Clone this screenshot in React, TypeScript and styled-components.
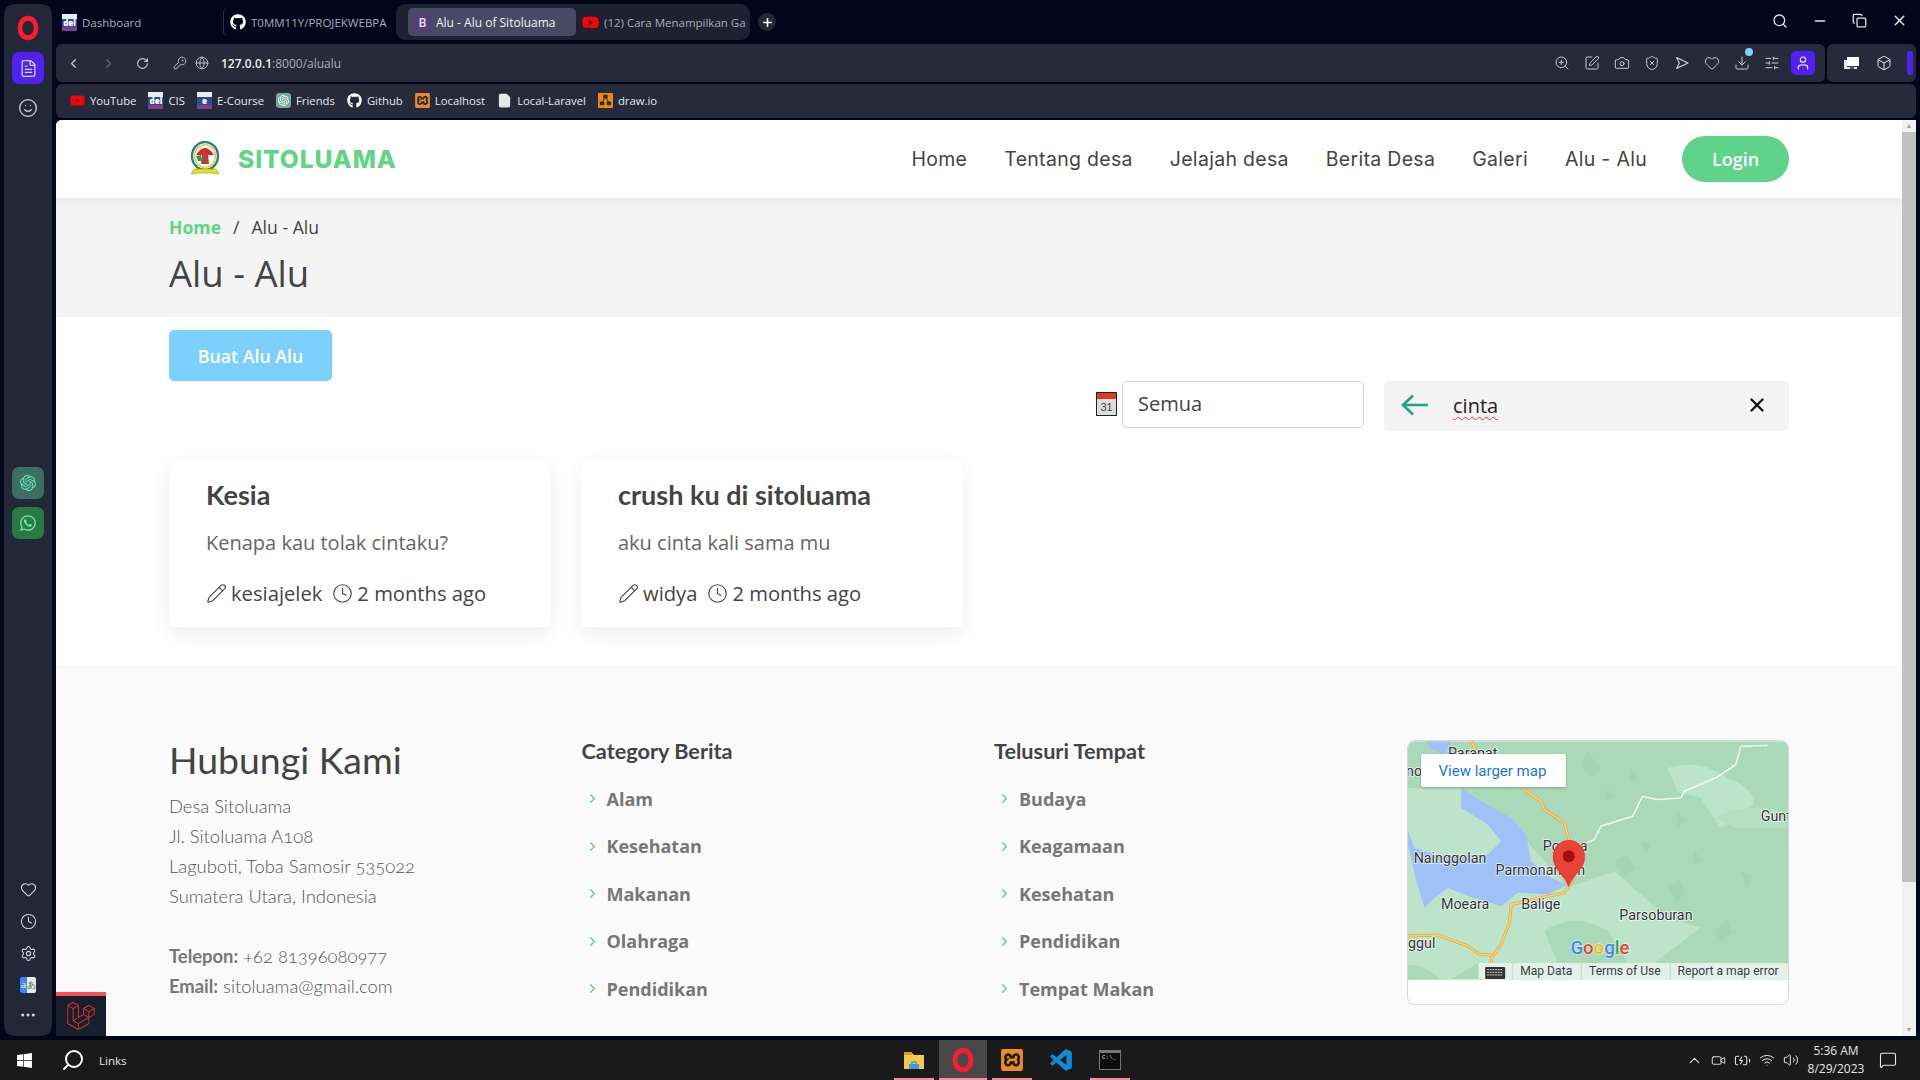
import React from 'react';
import styled, { createGlobalStyle } from 'styled-components';
import {
  Box, Camera, ChevronLeft, ChevronRight, ChevronUp, Clock, FileText, Globe, Heart,
  KeyRound, MessageSquare, Minus, Pencil, Plus, RotateCw, Search, Settings, ShieldX,
  Smile, SlidersHorizontal, SquarePen, User, Video, Volume2, Wifi, X, ZoomIn, Copy, Download,
  BatteryCharging, MoreHorizontal, File
} from 'lucide-react';
import { FaGithub, FaLaravel, FaWhatsapp, FaWindows, FaYoutube } from 'react-icons/fa';
import { SiOpenai, SiXampp, SiDiagramsdotnet } from 'react-icons/si';
import { BiLogoVisualStudio } from 'react-icons/bi';

const GlobalStyle = createGlobalStyle`
  html, body {
    margin: 0;
    padding: 0;
    background: #02061a;
    font-family: "Open Sans", "Liberation Sans", sans-serif;
  }
  * { box-sizing: border-box; }
`;

const Screen = styled.div`
  width: 1920px;
  height: 1080px;
  display: flex;
  flex-direction: column;
  overflow: hidden;
  background: #02061a;
`;

const Desktop = styled.div`
  flex: 1;
  min-height: 0;
  display: flex;
  padding: 4px;
  gap: 4px;
`;

/* opera side panel */
const Sidebar = styled.aside`
  width: 48px;
  flex-shrink: 0;
  background: #232838;
  border-radius: 10px;
  display: flex;
  flex-direction: column;
  align-items: center;
  padding: 8px 0 7px;
`;

const SideGroup = styled.div<{ $top?: number; $gap?: number; $auto?: boolean }>`
  display: flex;
  flex-direction: column;
  gap: ${p => p.$gap ?? 0}px;
  margin-top: ${p => (p.$auto ? 'auto' : `${p.$top ?? 0}px`)};
`;

const SideSlot = styled.div<{ $active?: boolean; $bg?: string; $h?: number }>`
  width: 32px;
  height: ${p => p.$h ?? 32}px;
  display: flex;
  align-items: center;
  justify-content: center;
  border-radius: 7px;
  color: #d6d9e2;
  background: ${p => (p.$active ? '#4f22f2' : p.$bg ?? 'transparent')};
`;

const TranslateIcon = styled.div`
  width: 16px;
  height: 16px;
  border-radius: 2px;
  display: flex;
  overflow: hidden;
  font-size: 9px;
  line-height: 16px;
  text-align: center;
  span { flex: 1; color: #fff; background: #4285f4; }
  span + span { color: #2e7d32; background: #e8e8e8; }
`;

const Browser = styled.div`
  flex: 1;
  min-width: 0;
  display: flex;
  flex-direction: column;
`;

const TabStrip = styled.div`
  height: 40px;
  margin: -2px 0 2px;
  display: flex;
  align-items: center;
  color: #a9adb9;
  font-size: 11.5px;
`;

const Tab = styled.div<{ $w: number; $pad?: number; $active?: boolean; $rule?: boolean }>`
  width: ${p => p.$w}px;
  height: 28px;
  flex-shrink: 0;
  display: flex;
  align-items: center;
  gap: 5px;
  padding: 0 ${p => (p.$active ? 6 : 8)}px 0 ${p => p.$pad ?? 6}px;
  overflow: hidden;
  white-space: nowrap;
  border-radius: 5px;
  border-left: ${p => (p.$rule ? '1px solid #30343f' : 'none')};
  background: ${p => (p.$active ? '#464a62' : 'transparent')};
  color: ${p => (p.$active ? '#f2f2f6' : '#a9adb9')};
  font-size: ${p => (p.$active ? 12 : 11.5)}px;
  svg { flex-shrink: 0; }
`;

const TabGroup = styled.div`
  width: 354px;
  height: 36px;
  flex-shrink: 0;
  display: flex;
  align-items: center;
  gap: 6px;
  padding-left: 6px;
  border-radius: 9px;
  background: #1d2131;
`;

const GroupMark = styled.div`
  width: 5px;
  height: 24px;
  border-radius: 3px;
  background: #4f22f2;
`;

const BootstrapIcon = styled.span`
  width: 17px;
  height: 17px;
  flex-shrink: 0;
  border-radius: 3px;
  background: #563d7c;
  color: #e8e4f2;
  font-size: 12px;
  font-weight: 600;
  line-height: 17px;
  text-align: center;
`;

const DelIcon = styled.span`
  width: 15px;
  height: 17px;
  flex-shrink: 0;
  background: linear-gradient(#e8edf7 0 30%, #2a4b9b 30% 75%, #7f3f8f 75%);
  color: #fff;
  font-size: 8px;
  font-weight: 800;
  line-height: 17px;
  text-align: center;
`;

const NewTab = styled.div`
  width: 18px;
  height: 18px;
  margin-left: 8px;
  border-radius: 50%;
  background: #232838;
  color: #fff;
  display: flex;
  align-items: center;
  justify-content: center;
`;

const WindowControls = styled.div`
  margin-left: auto;
  margin-right: 8px;
  margin-top: -3px;
  display: flex;
  align-items: center;
  gap: 24px;
  color: #e6e7ea;
`;

const BarRow = styled.div`
  height: 38px;
  display: flex;
  gap: 2px;
`;

const AddressBar = styled.div`
  flex: 1;
  display: flex;
  align-items: center;
  background: #262a3a;
  border-radius: 6px;
  padding-left: 10px;
  color: #c9ccd5;
`;

const NavIcons = styled.div`
  display: flex;
  align-items: center;
  gap: 20px;
  margin-right: 24px;
`;

const SecureIcons = styled.div`
  display: flex;
  align-items: center;
  gap: 8px;
  margin-right: 12px;
`;

const Url = styled.div`
  font-size: 12px;
  font-weight: 600;
  color: #eceef2;
  span { color: #a9adb9; font-weight: 400; }
`;

const ToolIcons = styled.div`
  margin-left: auto;
  display: flex;
  align-items: center;
  gap: 14px;
  margin-right: 10px;
  position: relative;
`;

const ProfileButton = styled.div`
  width: 24px;
  height: 24px;
  margin-left: -3px;
  border-radius: 5px;
  background: #4f22f2;
  color: #fff;
  display: flex;
  align-items: center;
  justify-content: center;
`;

const DownloadBox = styled.div`
  position: relative;
  display: flex;
`;

const DownloadDot = styled.span`
  position: absolute;
  top: -7px;
  right: -3px;
  width: 8px;
  height: 8px;
  border-radius: 50%;
  background: #7dd0fb;
`;

const ExtensionPanel = styled.div`
  width: 89px;
  display: flex;
  align-items: center;
  gap: 16px;
  padding-left: 17px;
  background: #262a3a;
  border-radius: 6px;
  color: #e6e7ea;
`;

const PanelMark = styled.div`
  width: 6px;
  height: 24px;
  margin-left: -1px;
  border-radius: 3px;
  background: #4f22f2;
`;

const BookmarksBar = styled.div`
  margin-top: 2px;
  height: 34px;
  display: flex;
  align-items: center;
  gap: 12px;
  padding: 0 0 2px 14px;
  background: #262a3a;
  border-radius: 6px;
  color: #e6e7ea;
  font-size: 11.3px;
`;

const Bookmark = styled.div`
  display: flex;
  align-items: center;
  gap: 5px;
  white-space: nowrap;
`;

const FriendsIcon = styled.span`
  width: 15px;
  height: 15px;
  border-radius: 3px;
  background: #74aa9c;
  color: #fff;
  display: flex;
  align-items: center;
  justify-content: center;
`;

const Viewport = styled.div`
  flex: 1;
  min-height: 0;
  margin-top: 2px;
  display: flex;
  background: #fff;
  border-top-left-radius: 6px;
  overflow: hidden;
`;

const Page = styled.main`
  flex: 1;
  min-width: 0;
  position: relative;
  overflow: hidden;
  background: #fff;
  display: flex;
  flex-direction: column;
`;

const ScrollTrack = styled.div`
  width: 14px;
  flex-shrink: 0;
  display: flex;
  flex-direction: column;
  align-items: center;
  background: #f1f1f1;
  color: #a0a0a0;
  font-size: 7px;
  line-height: 12px;
`;

const ScrollThumb = styled.div`
  width: 100%;
  height: 750px;
  background: #c1c1c1;
`;

const ScrollEnd = styled.div`
  margin-top: auto;
`;

const Container = styled.div`
  width: 1620px;
  margin: 0 auto;
`;

const SiteHeader = styled.header`
  height: 78px;
  flex-shrink: 0;
  background: #fff;
  position: relative;
  z-index: 1;
`;

const HeaderInner = styled(Container)`
  height: 100%;
  display: flex;
  align-items: center;
`;

const Brand = styled.div`
  display: flex;
  align-items: center;
  gap: 18px;
  padding-left: 21px;
  font-family: Inter, "Liberation Sans", sans-serif;
  font-size: 24.6px;
  font-weight: 800;
  letter-spacing: 0.9px;
  color: #62d484;
`;

const NavMenu = styled.nav`
  margin-left: auto;
  display: flex;
  align-items: center;
  gap: 37px;
  font-family: Inter, "Liberation Sans", sans-serif;
  font-size: 19.5px;
  font-weight: 400;
  letter-spacing: 0.3px;
  color: #444;
`;

const LoginButton = styled.div`
  width: 107px;
  height: 46px;
  margin-left: -2px;
  border-radius: 23px;
  background: #5fd38a;
  color: #fff;
  display: flex;
  align-items: center;
  justify-content: center;
  font-family: "Open Sans", sans-serif;
  font-size: 18px;
  font-weight: 600;
  letter-spacing: 0;
`;

const TitleBand = styled.section`
  height: 119px;
  flex-shrink: 0;
  padding-top: 17px;
  background: linear-gradient(#ececec, #f4f4f4 14px);
`;

const Crumbs = styled.div`
  display: flex;
  gap: 12px;
  font-size: 17.6px;
  line-height: 24px;
  color: #444;
  b { color: #62d484; font-weight: 700; }
`;

const PageTitle = styled.h1`
  margin: 11px 0 0;
  font-size: 36.5px;
  font-weight: 400;
  line-height: 46px;
  color: #444;
`;

const Content = styled(Container)`
  padding: 13px 0 38px;
`;

const CreateButton = styled.div`
  width: 163px;
  height: 51px;
  border-radius: 5px;
  background: #7dd0fb;
  color: #fff;
  display: flex;
  align-items: center;
  justify-content: center;
  font-size: 17.8px;
  font-weight: 600;
`;

const FilterRow = styled.div`
  display: flex;
  justify-content: flex-end;
  align-items: flex-start;
`;

const CalendarBox = styled.div`
  margin: 11px 5px 0 0;
  display: flex;
`;

const SelectBox = styled.div`
  width: 242px;
  height: 47px;
  margin-right: 20px;
  padding: 0 0 2px 15px;
  display: flex;
  align-items: center;
  border: 1px solid #ced4da;
  border-radius: 5px;
  background: #fff;
  font-size: 20px;
  color: #444;
`;

const SearchBox = styled.div`
  width: 405px;
  height: 50px;
  padding: 0 21px 2px 17px;
  display: flex;
  align-items: center;
  border-radius: 5px;
  background: #f3f3f3;
  font-size: 20px;
  color: #222;
`;

const SearchText = styled.span`
  margin-left: 24px;
  text-decoration: underline wavy #e53935 1.4px;
  text-underline-offset: 3px;
`;

const ClearIcon = styled.div`
  margin-left: auto;
  display: flex;
  color: #111;
`;

const CardGrid = styled.div`
  margin-top: 30px;
  display: grid;
  grid-template-columns: repeat(4, 382px);
  gap: 30px;
`;

const PostCard = styled.article`
  height: 166px;
  padding: 18px 37px 0;
  border-radius: 5px;
  background: #fff;
  box-shadow: 0 6px 22px rgba(0, 0, 0, 0.08);
`;

const PostTitle = styled.h3`
  margin: 0;
  font-family: Lato, "Liberation Sans", sans-serif;
  font-size: 27px;
  font-weight: 700;
  line-height: 32px;
  color: #444;
  white-space: nowrap;
`;

const PostBody = styled.p`
  margin: 16px 0 0;
  font-size: 20px;
  line-height: 32px;
  color: #666;
`;

const PostMeta = styled.div`
  margin-top: 18px;
  display: flex;
  align-items: center;
  gap: 4px;
  font-size: 20.2px;
  line-height: 32px;
  color: #444;
  svg { flex-shrink: 0; }
  span { margin-right: 6px; }
`;

const SiteFooter = styled.footer`
  flex: 1;
  padding-top: 73px;
  background: #fafafa;
`;

const FooterGrid = styled(Container)`
  display: grid;
  grid-template-columns: repeat(4, 1fr);
  gap: 30px;
`;

const ContactTitle = styled.h2`
  margin: 0 0 9px;
  font-family: Lato, "Liberation Sans", sans-serif;
  font-size: 37.4px;
  font-weight: 400;
  line-height: 44px;
  color: #444;
`;

const ContactLines = styled.div`
  font-family: Lato, "Liberation Sans", sans-serif;
  font-size: 18.4px;
  font-weight: 300;
  line-height: 30px;
  font-variant-numeric: oldstyle-nums;
  color: #555;
  b { font-weight: 700; color: #777; }
`;

const ContactGap = styled.div`
  height: 30px;
`;

const ColumnTitle = styled.h4`
  margin: 0 0 11px;
  font-family: Lato, "Liberation Sans", sans-serif;
  font-size: 21.7px;
  font-weight: 700;
  line-height: 26px;
  color: #444;
`;

const LinkItem = styled.div`
  height: 47.5px;
  display: flex;
  align-items: center;
  gap: 7px;
  padding-left: 3px;
  font-size: 18px;
  font-weight: 700;
  color: #777;
  svg { color: #5fd38a; }
`;

const MapCard = styled.div`
  position: relative;
  height: 265px;
  margin-top: 2px;
  border: 1px solid #d8d8d8;
  border-radius: 8px;
  background: #fff;
  overflow: hidden;
  svg { display: block; }
`;

const LargerMap = styled.div`
  position: absolute;
  left: 13px;
  top: 13px;
  width: 145px;
  height: 33px;
  padding-left: 18px;
  display: flex;
  align-items: center;
  border-radius: 2px;
  background: #fff;
  box-shadow: 0 1px 3px rgba(0, 0, 0, 0.25);
  font-family: Roboto, sans-serif;
  font-size: 15px;
  color: #1a73e8;
`;

const DevBar = styled.div`
  position: absolute;
  left: 0;
  bottom: 0;
  width: 50px;
  height: 44px;
  border-top: 4px solid #f9505e;
  background: #18202e;
  color: #e0342b;
  display: flex;
  align-items: center;
  justify-content: center;
`;

const Taskbar = styled.div`
  height: 40px;
  flex-shrink: 0;
  position: relative;
  display: flex;
  align-items: center;
  background: #1a1a1a;
  color: #e6e6e6;
`;

const StartArea = styled.div`
  display: flex;
  align-items: center;
  padding-left: 16px;
  gap: 28px;
  font-size: 11.5px;
`;

const SearchHint = styled.div`
  display: flex;
  align-items: center;
  gap: 14px;
`;

const MirroredSearch = styled(Search)`
  transform: scaleX(-1);
`;

const TaskApps = styled.div`
  position: absolute;
  left: 894px;
  top: 0;
  height: 40px;
  display: flex;
  gap: 5px;
`;

const TaskApp = styled.div<{ $active?: boolean; $open?: boolean; $w?: number }>`
  width: ${p => p.$w ?? 40}px;
  height: 40px;
  display: flex;
  align-items: center;
  justify-content: center;
  background: ${p => (p.$active ? '#484848' : 'transparent')};
  box-shadow: ${p => (p.$open ? 'inset 0 -2px 0 #ff8d99' : 'none')};
`;

const ConsoleIcon = styled.div`
  width: 22px;
  height: 20px;
  border: 1px solid #777;
  border-top-width: 3px;
  background: #0c0c0c;
  color: #ddd;
  font-family: "Liberation Mono", monospace;
  font-size: 6px;
  line-height: 10px;
  padding-left: 2px;
`;

const Tray = styled.div`
  margin-left: auto;
  display: flex;
  align-items: center;
  padding-right: 23px;
  gap: 8px;
  color: #e6e6e6;
`;

const TrayTime = styled.div`
  width: 72px;
  margin: 0 -1px 0 -7px;
  font-size: 12px;
  line-height: 18px;
  text-align: center;
`;

const OperaLogo = ({ size = 22 }: { size?: number }) => (
  <svg width={size} height={size} viewBox="0 0 24 24">
    <ellipse cx="12" cy="12" rx="7.5" ry="9" fill="none" stroke="#ff1b2d" strokeWidth="4.4" />
  </svg>
);

const SiteLogo = () => (
  <svg width="30" height="36" viewBox="0 0 30 36">
    <ellipse cx="15" cy="15" rx="13" ry="14" fill="#fff" stroke="#2d7f8f" strokeWidth="2.4" />
    <ellipse cx="15" cy="15" rx="10.4" ry="11.4" fill="none" stroke="#d8cf3a" strokeWidth="1.4" />
    <path d="M6 14 Q15 0 24 14 Z" fill="#e0261c" />
    <path d="M11 23 L12 13 L15 9 L18 13 L19 23 Z" fill="#b5413f" />
    <path d="M6 15 L11 14 L12 20 L8 20 Z" fill="#2f9a4e" />
    <path d="M1 33 L4 28 L26 28 L29 33 L22 32 L8 32 Z" fill="#eddf1f" stroke="#a09a20" strokeWidth=".6" />
  </svg>
);

const CalendarIcon = () => (
  <svg width="21" height="24" viewBox="0 0 21 24">
    <rect x="0.5" y="0.5" width="20" height="23" fill="#ddd" stroke="#222" />
    <rect x="1" y="1" width="19" height="6" fill="#e6381f" />
    <text x="10.5" y="19" textAnchor="middle" fontFamily="Liberation Sans" fontSize="11" fill="#444">31</text>
  </svg>
);

const BackArrow = () => (
  <svg width="28" height="22" viewBox="0 0 28 22" fill="none" stroke="#1aa587" strokeWidth="2.6">
    <path d="M2 11H27M12 1.5L2 11l10 9.5" />
  </svg>
);

const FlowIcon = () => (
  <svg width="16" height="16" viewBox="0 0 24 24" fill="none" stroke="currentColor" strokeWidth="1.8" strokeLinejoin="round">
    <path d="M4 4l17 8-17 8 4-8z" />
  </svg>
);

const ScreenIcon = () => (
  <svg width="16" height="14" viewBox="0 0 16 14">
    <path d="M3 1h12v9H3z" fill="#fff" />
    <path d="M0 4h3v7h10v2H0z" fill="#e6e7ea" />
    <path d="M6 10h4v3H6z" fill="#555" />
  </svg>
);

const FolderIcon = () => (
  <svg width="22" height="20" viewBox="0 0 22 20">
    <path d="M1 3h8l2 2h10v14H1z" fill="#f5c84c" />
    <path d="M1 2h8v3H1z" fill="#d49a22" />
    <path d="M6 14h10v5H6z" fill="#3f9be0" />
    <path d="M9 14v-2h4v2" fill="none" stroke="#3f9be0" strokeWidth="1.5" />
  </svg>
);

const ROADS = 'M210 30 L225 60 M360 170 L420 210 L430 235 L490 275 L505 330 L512 450 L490 485 L420 500 L330 520 L325 575 L300 640 L272 680 L270 696 M20 615 L110 612 L200 645 L235 670 L272 672';

const MapDrawing = () => (
  <svg width="381" height="239" viewBox="20 30 1145 716" fontFamily="Roboto, sans-serif">
    <rect x="20" y="30" width="1145" height="716" fill="#aad9b9" />
    <path d="M20 170 L180 170 L350 300 L500 470 L640 420 L800 560 L900 590 L760 696 L230 696 L150 746 L20 746 Z" fill="#bce4ca" />
    <path d="M800 110 Q900 80 980 140 Q1060 170 1060 220 L960 290 L900 200 L830 180 Z" fill="#bce4ca" />
    <path d="M940 260 Q1040 210 1130 240 L1165 290 L1000 290 Z" fill="#b4dfc3" />
    <path d="M430 600 Q520 540 620 600 L680 696 L470 696 Z" fill="#a9d9b8" />
    <path d="M20 700 Q70 700 120 746 L20 746 Z" fill="#a9d9b8" />
    <g fill="#a0d2b1" opacity=".7">
      <path d="M560 60l40 50-30 30-30-40z" />
      <path d="M640 390l40-20 25 45-35 20z" />
      <path d="M800 470l35-25 20 35-25 35z" />
      <path d="M940 600l40-35 15 40-35 25z" />
      <path d="M720 330l30 12-18 20z" />
      <path d="M830 240l24 30-30 25z" />
      <path d="M1020 420l36 12-18 36z" />
      <path d="M620 170l20 32-32 6z" />
      <path d="M880 360l30 30-35 10z" />
      <path d="M690 110l25 30-30 10z" />
    </g>
    <path d="M75 30 L150 30 L130 70 L85 50 Z" fill="#9fc1f8" />
    <path d="M180 170 L250 215 L330 260 L375 310 L390 390 L450 440 L498 462 L440 490 L350 485 L300 525 L200 495 L140 470 L100 500 L70 530 L45 450 L20 340 L20 300 L40 350 L120 375 L260 370 L300 330 L260 280 L180 230 Z" fill="#9fc1f8" />
    <g fill="none" strokeLinejoin="round">
      <path d={ROADS} stroke="#e6a83c" strokeWidth="9" />
      <path d={ROADS} stroke="#fdd26e" strokeWidth="5" />
      <path d="M1100 42 L1020 45 L1005 100 L945 140 L850 180 L840 200 L770 205 L725 195 L695 255 L600 285 L580 325 L555 335" stroke="#fff" strokeWidth="4" />
    </g>
    <g fontSize="43" fill="#333" stroke="#fff" strokeWidth="5" paintOrder="stroke" strokeOpacity=".75">
      <text x="140" y="80">Parapat</text>
      <text x="14" y="134">no</text>
      <text x="425" y="358">Porsea</text>
      <text x="37" y="396">Nainggolan</text>
      <text x="283" y="431">Parmonangan</text>
      <text x="119" y="534">Moeara</text>
      <text x="360" y="534">Balige</text>
      <text x="655" y="568">Parsoburan</text>
      <text x="1080" y="270">Gunt</text>
      <text x="20" y="650">ggul</text>
    </g>
    <path d="M503 466 C490 430 456 415 456 375 A47.5 47.5 0 0 1 551 375 C551 415 516 430 503 466 Z" fill="#ea4335" stroke="#c5221f" strokeWidth="1.5" />
    <circle cx="503" cy="375" r="18" fill="#a50e0e" />
    <text x="508" y="668" fontSize="56" fontFamily="Roboto, sans-serif" fontWeight="500" stroke="#fff" strokeWidth="4" paintOrder="stroke" strokeOpacity=".6">
      <tspan fill="#4285f4">G</tspan>
      <tspan fill="#ea4335">o</tspan>
      <tspan fill="#fbbc05">o</tspan>
      <tspan fill="#4285f4">g</tspan>
      <tspan fill="#34a853">l</tspan>
      <tspan fill="#ea4335">e</tspan>
    </text>
    <rect x="232" y="696" width="933" height="50" fill="#e4f1e9" />
    <path d="M335 696v50M541 696v50M808 696v50" stroke="#bcdcc8" strokeWidth="3" />
    <rect x="252" y="708" width="60" height="36" rx="3" fill="#333" />
    <path d="M258 716h48M258 724h48M258 732h48" stroke="#e4f1e9" strokeWidth="3" strokeDasharray="5 3" />
    <g fontSize="36.5" fill="#3c4043">
      <text x="357" y="733">Map Data</text>
      <text x="564" y="733">Terms of Use</text>
      <text x="830" y="733">Report a map error</text>
    </g>
  </svg>
);

const posts = [
  { title: 'Kesia', body: 'Kenapa kau tolak cintaku?', author: 'kesiajelek' },
  { title: 'crush ku di sitoluama', body: 'aku cinta kali sama mu', author: 'widya' },
];

const categories = ['Alam', 'Kesehatan', 'Makanan', 'Olahraga', 'Pendidikan'];
const places = ['Budaya', 'Keagamaan', 'Kesehatan', 'Pendidikan', 'Tempat Makan'];

const App: React.FC = () => {
  return (
    <Screen>
      <GlobalStyle />
      <Desktop>
        <Sidebar>
          <SideGroup $gap={8}>
            <SideSlot><OperaLogo size={26} /></SideSlot>
            <SideSlot $active><FileText size={19} strokeWidth={1.6} /></SideSlot>
            <SideSlot><Smile size={20} strokeWidth={1.5} /></SideSlot>
          </SideGroup>
          <SideGroup $top={343} $gap={8}>
            <SideSlot $bg="#3c6f63"><SiOpenai size={16} color="#6ee7b7" /></SideSlot>
            <SideSlot $bg="#2a7a46"><FaWhatsapp size={18} color="#6ff0a0" /></SideSlot>
          </SideGroup>
          <SideGroup $auto>
            <SideSlot><Heart size={17} strokeWidth={1.5} /></SideSlot>
            <SideSlot><Clock size={17} strokeWidth={1.5} /></SideSlot>
            <SideSlot><Settings size={17} strokeWidth={1.5} /></SideSlot>
            <SideSlot><TranslateIcon><span>a</span><span>あ</span></TranslateIcon></SideSlot>
            <SideSlot $h={28}><MoreHorizontal size={18} /></SideSlot>
          </SideGroup>
        </Sidebar>

        <Browser>
          <TabStrip>
            <Tab $w={167} $pad={6}><DelIcon>del</DelIcon>Dashboard</Tab>
            <Tab $w={173} $rule $pad={6}><FaGithub size={16} color="#fff" />T0MM11Y/PROJEKWEBPA</Tab>
            <TabGroup>
              <GroupMark />
              <Tab $w={168} $active><BootstrapIcon>B</BootstrapIcon>Alu - Alu of Sitoluama</Tab>
              <Tab $w={168} $pad={0}><FaYoutube size={17} color="#f00" />(12) Cara Menampilkan Ga</Tab>
            </TabGroup>
            <NewTab><Plus size={13} strokeWidth={3} /></NewTab>
            <WindowControls>
              <Search size={16} />
              <Minus size={16} />
              <Copy size={15} />
              <X size={17} />
            </WindowControls>
          </TabStrip>

          <BarRow>
            <AddressBar>
              <NavIcons>
                <ChevronLeft size={15} />
                <ChevronRight size={15} color="#666a78" />
                <RotateCw size={13} />
              </NavIcons>
              <SecureIcons>
                <KeyRound size={14} strokeWidth={1.5} />
                <Globe size={14} strokeWidth={1.5} />
              </SecureIcons>
              <Url>127.0.0.1<span>:8000/alualu</span></Url>
              <ToolIcons>
                <ZoomIn size={16} strokeWidth={1.5} />
                <SquarePen size={16} strokeWidth={1.5} />
                <Camera size={16} strokeWidth={1.5} />
                <ShieldX size={16} strokeWidth={1.5} />
                <FlowIcon />
                <Heart size={16} strokeWidth={1.5} />
                <DownloadBox><Download size={16} strokeWidth={1.5} /><DownloadDot /></DownloadBox>
                <SlidersHorizontal size={16} strokeWidth={1.5} />
                <ProfileButton><User size={16} strokeWidth={1.6} /></ProfileButton>
              </ToolIcons>
            </AddressBar>
            <ExtensionPanel>
              <ScreenIcon />
              <Box size={16} strokeWidth={1.5} />
              <PanelMark />
            </ExtensionPanel>
          </BarRow>

          <BookmarksBar>
            <Bookmark><FaYoutube size={15} color="#f00" />YouTube</Bookmark>
            <Bookmark><DelIcon>del</DelIcon>CIS</Bookmark>
            <Bookmark><DelIcon>e</DelIcon>E-Course</Bookmark>
            <Bookmark><FriendsIcon><SiOpenai size={11} /></FriendsIcon>Friends</Bookmark>
            <Bookmark><FaGithub size={15} color="#fff" />Github</Bookmark>
            <Bookmark><SiXampp size={15} color="#e8892b" />Localhost</Bookmark>
            <Bookmark><File size={15} fill="#e6e7ea" />Local-Laravel</Bookmark>
            <Bookmark><SiDiagramsdotnet size={15} color="#f08705" />draw.io</Bookmark>
          </BookmarksBar>

          <Viewport>
            <Page>
              <SiteHeader>
                <HeaderInner>
                  <Brand><SiteLogo />SITOLUAMA</Brand>
                  <NavMenu>
                    <span>Home</span>
                    <span>Tentang desa</span>
                    <span>Jelajah desa</span>
                    <span>Berita Desa</span>
                    <span>Galeri</span>
                    <span>Alu - Alu</span>
                    <LoginButton>Login</LoginButton>
                  </NavMenu>
                </HeaderInner>
              </SiteHeader>

              <TitleBand>
                <Container>
                  <Crumbs><b>Home</b><span>/</span><span>Alu - Alu</span></Crumbs>
                  <PageTitle>Alu - Alu</PageTitle>
                </Container>
              </TitleBand>

              <Content>
                <CreateButton>Buat Alu Alu</CreateButton>
                <FilterRow>
                  <CalendarBox><CalendarIcon /></CalendarBox>
                  <SelectBox>Semua</SelectBox>
                  <SearchBox>
                    <BackArrow />
                    <SearchText>cinta</SearchText>
                    <ClearIcon><X size={22} strokeWidth={2.6} /></ClearIcon>
                  </SearchBox>
                </FilterRow>
                <CardGrid>
                  {posts.map(post => (
                    <PostCard key={post.title}>
                      <PostTitle>{post.title}</PostTitle>
                      <PostBody>{post.body}</PostBody>
                      <PostMeta>
                        <Pencil size={21} strokeWidth={1.3} />
                        <span>{post.author}</span>
                        <Clock size={21} strokeWidth={1.3} />
                        2 months ago
                      </PostMeta>
                    </PostCard>
                  ))}
                </CardGrid>
              </Content>

              <SiteFooter>
                <FooterGrid>
                  <div>
                    <ContactTitle>Hubungi Kami</ContactTitle>
                    <ContactLines>
                      <div>Desa Sitoluama</div>
                      <div>Jl. Sitoluama A108</div>
                      <div>Laguboti, Toba Samosir 535022</div>
                      <div>Sumatera Utara, Indonesia</div>
                      <ContactGap />
                      <div><b>Telepon:</b> +62 81396080977</div>
                      <div><b>Email:</b> sitoluama@gmail.com</div>
                    </ContactLines>
                  </div>
                  <div>
                    <ColumnTitle>Category Berita</ColumnTitle>
                    {categories.map(name => (
                      <LinkItem key={name}><ChevronRight size={15} strokeWidth={2.4} />{name}</LinkItem>
                    ))}
                  </div>
                  <div>
                    <ColumnTitle>Telusuri Tempat</ColumnTitle>
                    {places.map(name => (
                      <LinkItem key={name}><ChevronRight size={15} strokeWidth={2.4} />{name}</LinkItem>
                    ))}
                  </div>
                  <MapCard>
                    <MapDrawing />
                    <LargerMap>View larger map</LargerMap>
                  </MapCard>
                </FooterGrid>
              </SiteFooter>

              <DevBar><FaLaravel size={28} /></DevBar>
            </Page>
            <ScrollTrack>
              ▲
              <ScrollThumb />
              <ScrollEnd>▼</ScrollEnd>
            </ScrollTrack>
          </Viewport>
        </Browser>
      </Desktop>

      <Taskbar>
        <StartArea>
          <FaWindows size={17} color="#fff" />
          <SearchHint>
            <MirroredSearch size={24} color="#fff" strokeWidth={2} />
            Links
          </SearchHint>
        </StartArea>
        <TaskApps>
          <TaskApp $open><FolderIcon /></TaskApp>
          <TaskApp $active $open $w={48}><OperaLogo size={26} /></TaskApp>
          <TaskApp $open><SiXampp size={22} color="#f08a24" /></TaskApp>
          <TaskApp $w={48}><BiLogoVisualStudio size={26} color="#0f8ad6" /></TaskApp>
          <TaskApp $open><ConsoleIcon>C:\_</ConsoleIcon></TaskApp>
        </TaskApps>
        <Tray>
          <ChevronUp size={17} strokeWidth={1.5} />
          <Video size={15} strokeWidth={1.5} />
          <BatteryCharging size={17} strokeWidth={1.5} />
          <Wifi size={16} strokeWidth={1.5} />
          <Volume2 size={16} strokeWidth={1.5} />
          <TrayTime>5:36 AM<br />8/29/2023</TrayTime>
          <MessageSquare size={18} strokeWidth={1.5} />
        </Tray>
      </Taskbar>
    </Screen>
  );
};

export default App;
